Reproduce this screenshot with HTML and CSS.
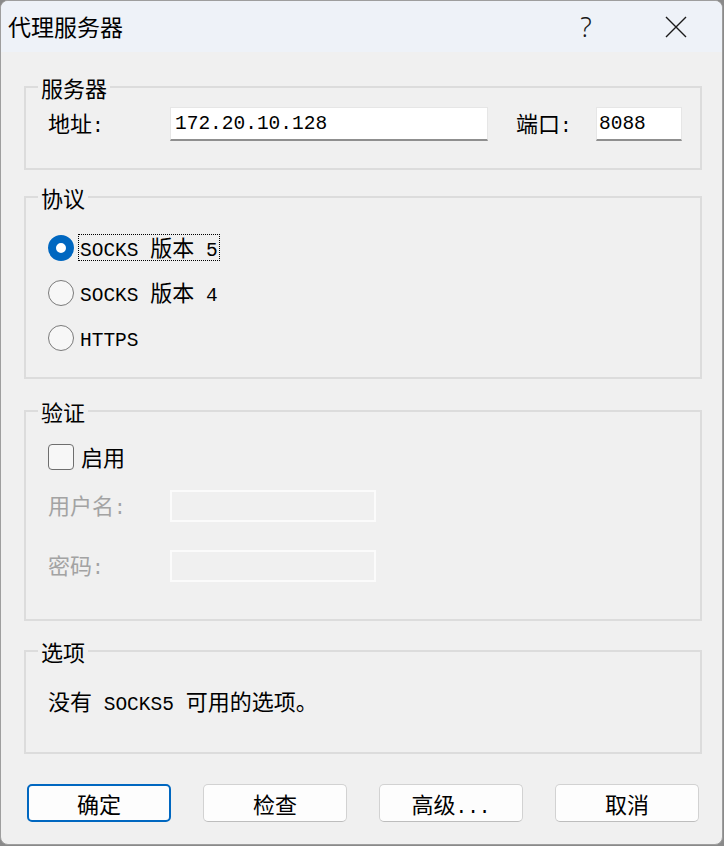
FILE: index.html
```html
<!DOCTYPE html>
<html lang="zh-CN">
<head>
<meta charset="utf-8">
<title>代理服务器</title>
<link rel="stylesheet" href="styles.css">
</head>
<body>
<div class="window">
  <div class="titlebar">
    <span class="title">代理服务器</span>
    <span class="tb-btn help">?</span>
    <span class="tb-btn close">
      <svg width="22" height="22" viewBox="0 0 22 22"><path d="M1 1 L21 21 M21 1 L1 21" stroke="#1a1a1a" stroke-width="1.4" fill="none"/></svg>
    </span>
  </div>
  <div class="body">
    <div class="group g-server">
      <span class="group-title">服务器</span>
      <div class="row">
        <span class="lbl">地址<span class="lat">:</span></span>
        <div class="input addr"><span class="lat">172.20.10.128</span></div>
        <span class="lbl port-lbl">端口<span class="lat">:</span></span>
        <div class="input port"><span class="lat">8088</span></div>
      </div>
    </div>

    <div class="group g-proto">
      <span class="group-title">协议</span>
      <div class="opt">
        <span class="radio on"></span>
        <span class="opt-text focus"><span class="lat">SOCKS </span>版本<span class="lat"> 5</span></span>
      </div>
      <div class="opt">
        <span class="radio"></span>
        <span class="opt-text"><span class="lat">SOCKS </span>版本<span class="lat"> 4</span></span>
      </div>
      <div class="opt">
        <span class="radio"></span>
        <span class="opt-text"><span class="lat">HTTPS</span></span>
      </div>
    </div>

    <div class="group g-auth">
      <span class="group-title">验证</span>
      <div class="opt check-row">
        <span class="checkbox"></span>
        <span class="opt-text">启用</span>
      </div>
      <div class="row field-row">
        <span class="lbl disabled">用户名<span class="lat">:</span></span>
        <div class="input off"></div>
      </div>
      <div class="row field-row pw-row">
        <span class="lbl disabled">密码<span class="lat">:</span></span>
        <div class="input off"></div>
      </div>
    </div>

    <div class="group g-opts">
      <span class="group-title">选项</span>
      <div class="note">没有<span class="lat"> SOCKS5 </span>可用的选项。</div>
    </div>

    <div class="buttons">
      <button class="btn default"><span>确定</span></button>
      <button class="btn"><span>检查</span></button>
      <button class="btn"><span>高级<span class="lat">...</span></span></button>
      <button class="btn"><span>取消</span></button>
    </div>
  </div>
</div>
</body>
</html>
```

FILE: styles.css
```css
* { box-sizing: border-box; }
html, body { margin: 0; padding: 0; }
body {
  width: 724px;
  height: 846px;
  overflow: hidden;
  background: #8a8a8a;
  font-family: "Noto Sans CJK SC", "Noto Sans", sans-serif;
  font-size: 22px;
  color: #000;
}
.window {
  width: 723px;
  height: 845px;
  border: 1px solid #9e9e9e;
  border-radius: 8px;
  background: #f0f0f0;
  overflow: hidden;
}
.titlebar {
  height: 51px;
  background: #eef2f8;
  display: flex;
  align-items: center;
  padding-left: 7px;
  padding-right: 23px;
}
.title {
  flex: 1;
  font-size: 23px;
  line-height: 1;
}
.tb-btn {
  width: 46px;
  height: 40px;
  display: flex;
  align-items: center;
  justify-content: center;
}
.help {
  font-family: "Noto Sans", sans-serif;
  font-size: 27px;
  font-weight: 300;
  color: #1a1a1a;
  margin-right: 44px;
}
.body {
  padding: 34px 20px 0 23px;
}
.lat {
  font-family: "Liberation Mono", monospace;
  font-size: 19.5px;
}
.group {
  position: relative;
  border: 2px solid #dcdcdc;
  padding-left: 22px;
}
.group-title {
  position: absolute;
  top: -14px;
  left: 12px;
  padding: 0 3px;
  line-height: 26px;
  background: #f0f0f0;
}
.g-server { padding-top: 19px; padding-bottom: 27px; }
.g-proto { margin-top: 26px; padding-top: 27px; padding-bottom: 17px; }
.g-auth { margin-top: 31px; padding-top: 28px; padding-bottom: 36px; }
.g-opts { margin-top: 29px; padding-top: 34px; padding-bottom: 38px; }

.row {
  display: flex;
  align-items: center;
  height: 34px;
}
.lbl {
  width: 122px;
  flex: none;
  line-height: 1;
}
.port-lbl {
  width: 80px;
  margin-left: 28px;
}
.input {
  height: 34px;
  background: #fff;
  border: 1px solid #e6e6e6;
  border-bottom: 2px solid #8f8f8f;
  display: flex;
  align-items: center;
  padding-left: 4px;
}
.addr { width: 318px; }
.port { width: 86px; padding-left: 2px; }

.opt {
  display: flex;
  align-items: center;
  height: 45px;
}
.radio {
  width: 26px;
  height: 26px;
  border-radius: 50%;
  border: 1.5px solid #7a7a7a;
  background: #f7f7f7;
  flex: none;
}
.radio.on {
  border: 8px solid #0067c0;
  background: #fff;
}
.opt-text {
  margin-left: 4px;
  padding: 0 1px 2px;
  height: 27px;
  line-height: 23px;
  border: 1px solid transparent;
  display: inline-block;
  white-space: pre;
}
.opt-text.focus {
  border: 1px dotted #000;
}
.checkbox {
  width: 26px;
  height: 26px;
  border: 1.5px solid #6e6e6e;
  border-radius: 4px;
  background: #f7f7f7;
  flex: none;
}
.check-row { height: 34px; }
.check-row .opt-text { margin-left: 5px; }
.field-row { margin-top: 15px; }
.pw-row { margin-top: 26px; }
.disabled { color: #a3a3a3; }
.input.off {
  width: 206px;
  height: 32px;
  background: #f0f0f0;
  border: 2px solid #fbfbfb;
}
.note {
  height: 28px;
  line-height: 28px;
  white-space: pre;
}
.buttons {
  margin-top: 30px;
  margin-left: 3px;
  margin-right: 3px;
  display: flex;
  justify-content: space-between;
}
.btn {
  width: 144px;
  height: 38px;
  background: #fdfdfd;
  border: 1px solid #d2d2d2;
  border-bottom-color: #bdbdbd;
  border-radius: 5px;
  font-family: "Noto Sans CJK SC", sans-serif;
  font-size: 22px;
  color: #000;
  padding: 0;
  display: flex;
  align-items: center;
  justify-content: center;
  white-space: pre;
}
.btn.default {
  border: 2px solid #0067c0;
}
```
